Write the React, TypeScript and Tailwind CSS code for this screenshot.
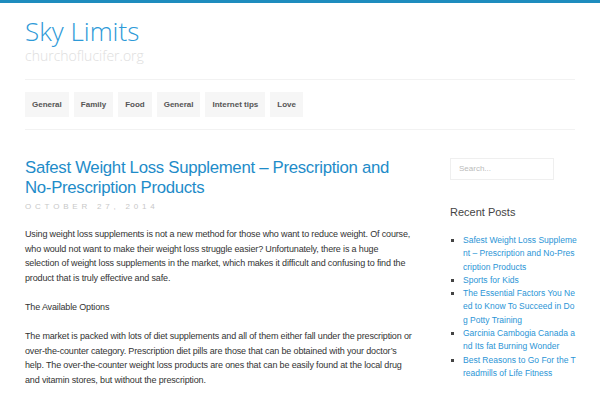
import React from "react";

const navItems = ["General", "Family", "Food", "General", "Internet tips", "Love"];

const recentPosts = [
	"Safest Weight Loss Supplement – Prescription and No-Prescription Products",
	"Sports for Kids",
	"The Essential Factors You Need to Know To Succeed in Dog Potty Training",
	"Garcinia Cambogia Canada and Its fat Burning Wonder",
	"Best Reasons to Go For the Treadmills of Life Fitness",
];

const App = () => {
	return (
		<div className="w-[600px] h-[400px] overflow-hidden bg-white font-['Liberation_Sans',Arial,sans-serif]">
			<div className="h-[3px] bg-[#1e8cbe]"></div>

			<div className="px-[25px]">
				{/* Header */}
				<header className="pt-[12px] pb-[14px] border-b border-[#f2f2f2]">
					<h1 className="font-['Open_Sans',sans-serif] font-light text-[26px] leading-[32px] text-[#2e9ad8]">
						Sky Limits
					</h1>
					<p className="font-['Open_Sans',sans-serif] font-light text-[14px] leading-[18px] text-[#dedede]">
						churchoflucifer.org
					</p>
				</header>

				{/* Nav */}
				<nav className="flex gap-[5px] py-[12px] border-b border-[#f2f2f2]">
					{navItems.map((item, i) => (
						<a
							key={i}
							className="h-[25px] px-[7px] flex items-center bg-[#f6f6f6] text-[#555] text-[8px] font-bold"
						>
							{item}
						</a>
					))}
				</nav>

				<div className="flex gap-[43px] pt-[28px]">
					{/* Main */}
					<main className="w-[382px] shrink-0">
						<h2 className="text-[16.8px] leading-[20px] tracking-[-0.3px] text-[#1e8cc9]">
							Safest Weight Loss Supplement – Prescription and No-Prescription Products
						</h2>
						<div className="mt-[4px] text-[8px] leading-[10px] tracking-[3.8px] text-[#c8c8c8] uppercase">
							October 27, 2014
						</div>
						<div className="mt-[15px] text-[9px] leading-[14.6px] tracking-[-0.15px] text-[#333] space-y-[14.6px] whitespace-nowrap">
							<p>
								Using weight loss supplements is not a new method for those who want to reduce weight. Of course,
								<br />
								who would not want to make their weight loss struggle easier? Unfortunately, there is a huge
								<br />
								selection of weight loss supplements in the market, which makes it difficult and confusing to find the
								<br />
								product that is truly effective and safe.
							</p>
							<p>The Available Options</p>
							<p>
								The market is packed with lots of diet supplements and all of them either fall under the prescription or
								<br />
								over-the-counter category. Prescription diet pills are those that can be obtained with your doctor’s
								<br />
								help. The over-the-counter weight loss products are ones that can be easily found at the local drug
								<br />
								and vitamin stores, but without the prescription.
							</p>
						</div>
					</main>

					{/* Sidebar */}
					<aside className="w-[127px] shrink-0">
						<div className="w-[104px] h-[22px] border border-[#efefef] flex items-center px-[8px] text-[8px] text-[#bbb]">
							Search...
						</div>
						<h3 className="mt-[26px] text-[11px] leading-[13px] text-[#444]">Recent Posts</h3>
						<ul className="mt-[15px] pl-[13px] list-[square] text-[8.5px] leading-[13.3px] text-[#2b95d6] break-all marker:text-[#444]">
							{recentPosts.map((post, i) => (
								<li key={i}>{post}</li>
							))}
						</ul>
					</aside>
				</div>
			</div>
		</div>
	);
};

export default App;
